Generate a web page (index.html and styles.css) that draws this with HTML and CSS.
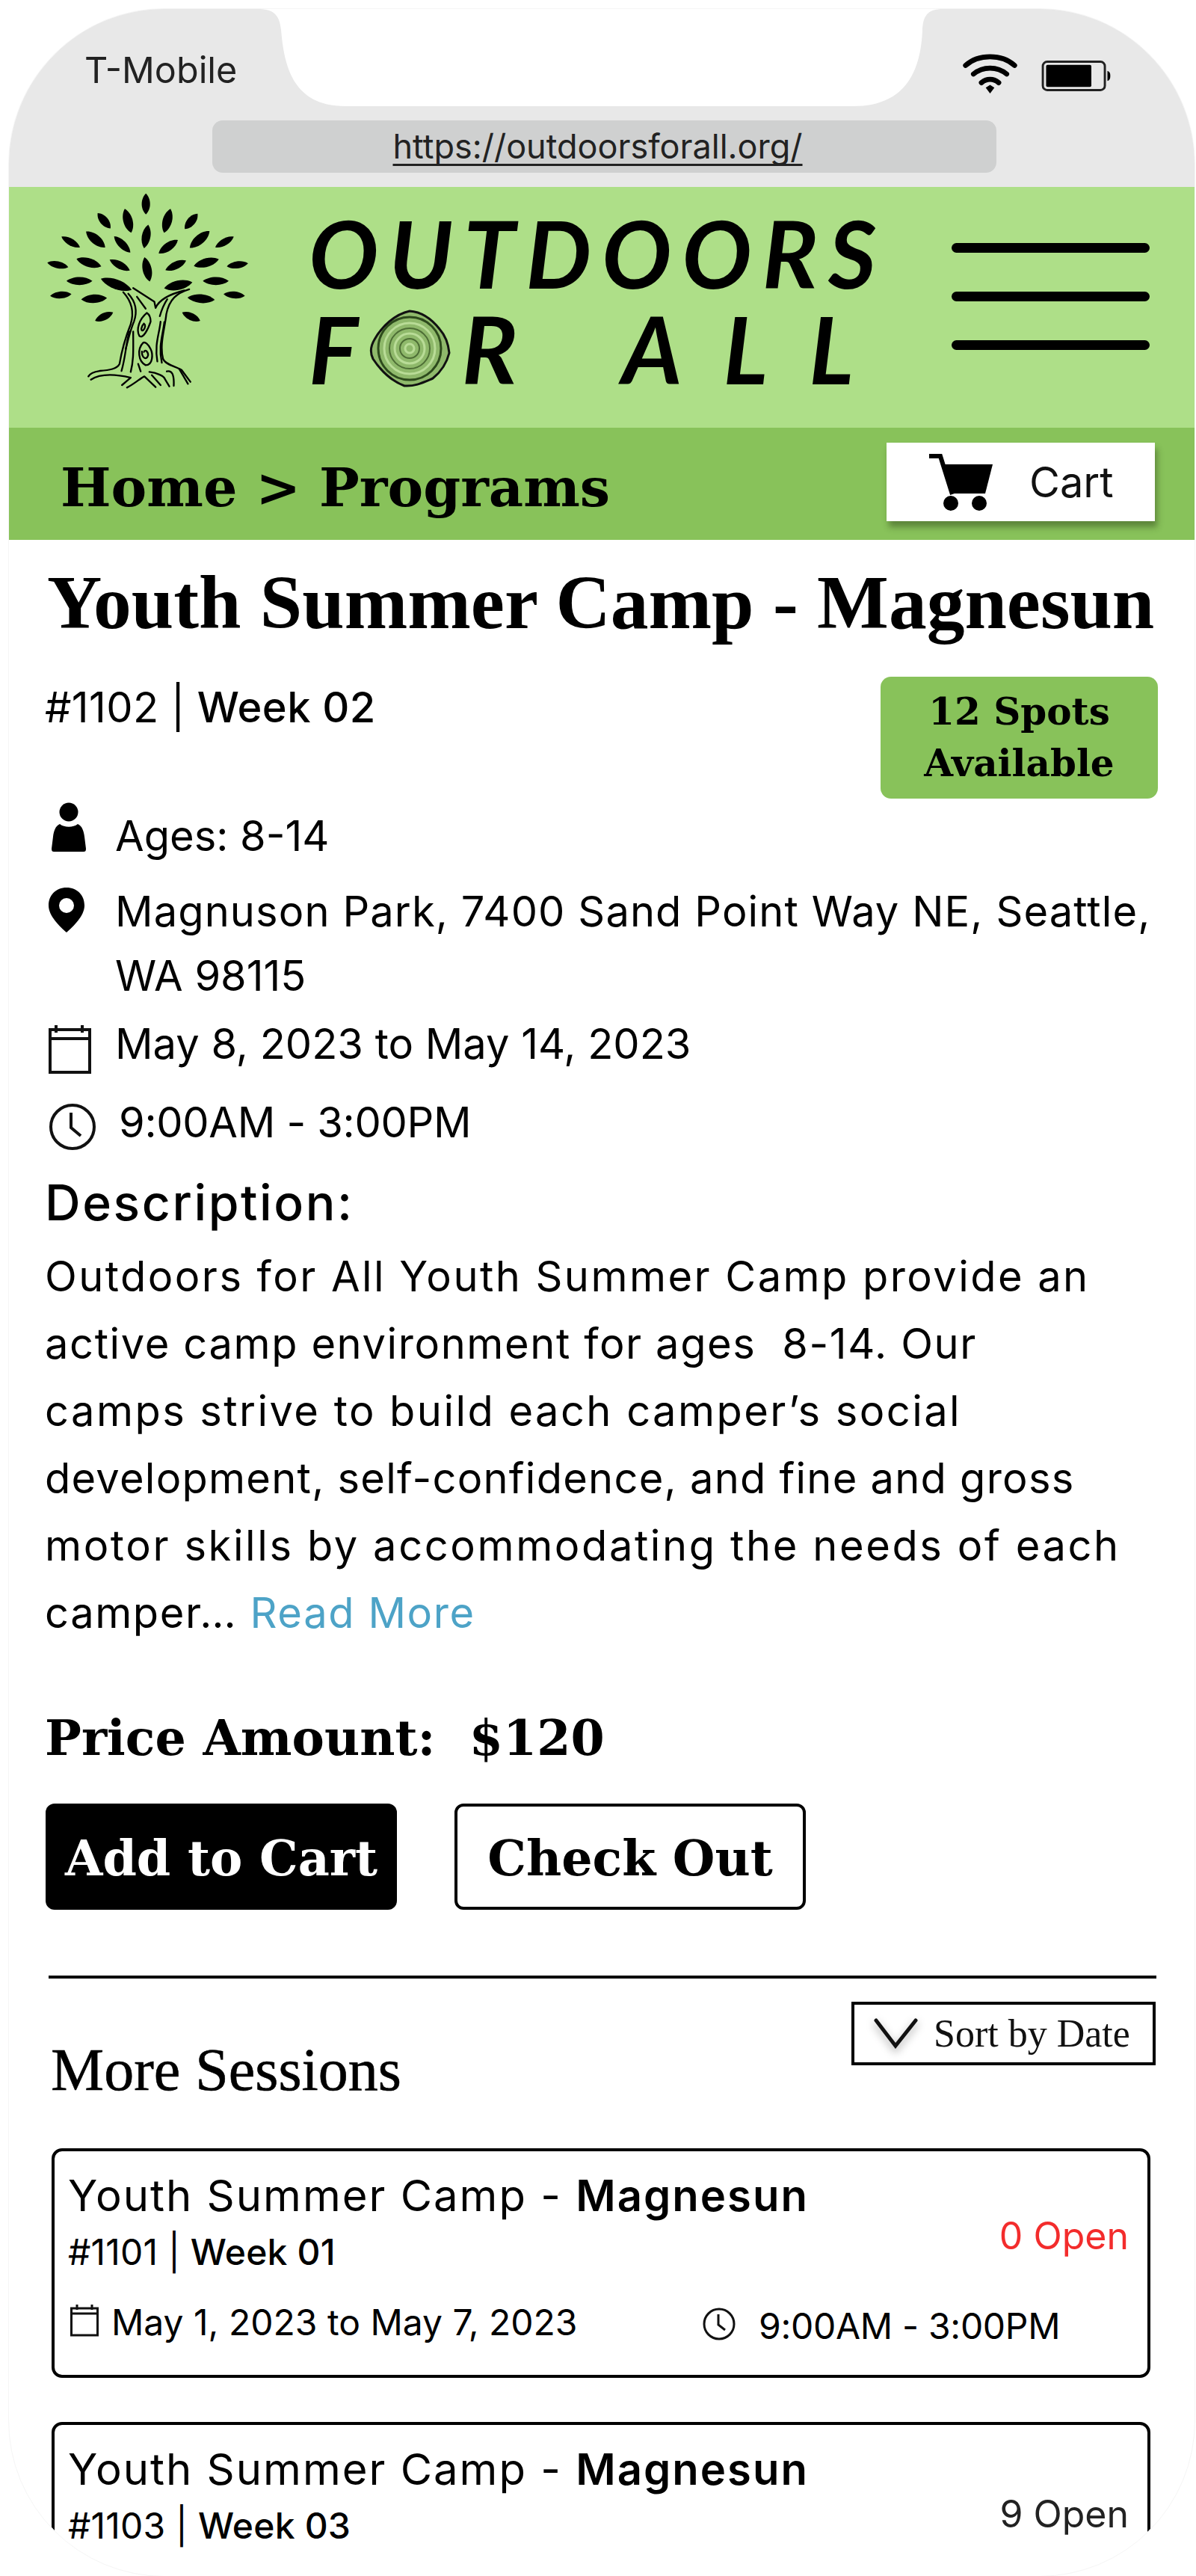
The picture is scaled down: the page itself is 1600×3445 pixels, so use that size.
FILE: index.html
```html
<!DOCTYPE html>
<html lang="en">
<head>
<meta charset="utf-8">
<title>Youth Summer Camp - Magnesun</title>
<link rel="stylesheet" href="styles.css">
</head>
<body>
<div class="phone">
  <div class="status">
    <svg class="notch" viewBox="12 12 1586 240" aria-hidden="true"><path d="M345 12C368 12 374 22 376 40C380 85 390 142 462 142H1142C1215 142 1232 90 1234 40C1235 22 1240 12 1262 12Z"/></svg>
    <div class="status-top">
      <span class="carrier">T-Mobile</span>
      <div class="status-icons">
        <svg class="wifi" viewBox="0 0 76 56" aria-hidden="true"><g class="wifi-arcs"><path d="M4 16C22 0 54 0 72 16"/><path d="M15 28C28 17 48 17 61 28"/><path d="M26 40C33 34 43 34 50 40"/></g><path d="M32 47L38 43L44 47L38 55Z"/></svg>
        <svg class="battery" viewBox="0 0 94 42" aria-hidden="true"><rect x="1.5" y="1.5" width="85" height="39" rx="6" class="batt-case"/><rect x="6" y="6" width="62" height="30" rx="2"/><path d="M90 14C93 15 94 17 94 21C94 25 93 27 90 28Z"/></svg>
      </div>
    </div>
    <div class="url-bar"><a class="url" href="#">https://outdoorsforall.org/</a></div>
  </div>

  <header class="brand">
    <svg class="tree" viewBox="60 50 820 790" aria-hidden="true">
      <defs><path id="leaf" d="M-1 0C-.55-.85.45-1 1 0C.45 1-.55.85-1 0Z"/></defs>
      <g class="leaves">
        <use href="#leaf" transform="translate(466 97) rotate(90) scale(42 24)"/>
        <use href="#leaf" transform="translate(298 165) rotate(50) scale(40 24)"/>
        <use href="#leaf" transform="translate(394 165) rotate(75) scale(50 27)"/>
        <use href="#leaf" transform="translate(552 165) rotate(-75) scale(50 27)"/>
        <use href="#leaf" transform="translate(648 167) rotate(-50) scale(40 24)"/>
        <use href="#leaf" transform="translate(467 228) rotate(-80) scale(48 25)"/>
        <use href="#leaf" transform="translate(164 250) rotate(30) scale(43 20)"/>
        <use href="#leaf" transform="translate(264 240) rotate(40) scale(50 27)"/>
        <use href="#leaf" transform="translate(371 260) rotate(45) scale(46 22)"/>
        <use href="#leaf" transform="translate(556 269) rotate(-35) scale(47 24)"/>
        <use href="#leaf" transform="translate(682 240) rotate(-40) scale(52 27)"/>
        <use href="#leaf" transform="translate(782 250) rotate(-30) scale(43 20)"/>
        <use href="#leaf" transform="translate(112 342) rotate(12) scale(43 20)"/>
        <use href="#leaf" transform="translate(237 333) rotate(17) scale(52 25)"/>
        <use href="#leaf" transform="translate(361 343) rotate(28) scale(46 22)"/>
        <use href="#leaf" transform="translate(471 360) rotate(78) scale(50 26)"/>
        <use href="#leaf" transform="translate(586 344) rotate(-25) scale(46 22)"/>
        <use href="#leaf" transform="translate(709 333) rotate(-15) scale(52 25)"/>
        <use href="#leaf" transform="translate(834 342) rotate(-8) scale(43 20)"/>
        <use href="#leaf" transform="translate(199 407) scale(52 23)"/>
        <use href="#leaf" transform="translate(347 420) rotate(20) scale(66 28)"/>
        <use href="#leaf" transform="translate(596 424) rotate(-12) scale(58 27)"/>
        <use href="#leaf" transform="translate(747 407) scale(52 23)"/>
        <use href="#leaf" transform="translate(124 463) rotate(-5) scale(43 20)"/>
        <use href="#leaf" transform="translate(258 478) rotate(-3) scale(52 25)"/>
        <use href="#leaf" transform="translate(688 478) rotate(5) scale(55 25)"/>
        <use href="#leaf" transform="translate(821 463) rotate(5) scale(43 20)"/>
        <use href="#leaf" transform="translate(298 550) rotate(-25) scale(40 21)"/>
        <use href="#leaf" transform="translate(648 550) rotate(25) scale(40 21)"/>
      </g>
      <g class="trunk">
        <path d="M375 452C410 490 420 530 405 580C385 630 370 680 360 740C350 760 320 765 280 768C255 772 240 780 235 790"/>
        <path d="M395 458C425 490 432 530 418 570C405 600 395 640 385 680"/>
        <path d="M640 440C590 455 560 480 548 540C542 600 520 660 535 720C545 745 590 750 610 765L645 812"/>
        <path d="M415 435L500 490L505 515C520 480 560 460 620 445"/>
        <path d="M430 470L465 518"/>
        <path d="M470 535C440 560 425 600 440 628C455 640 475 600 485 570C485 550 478 540 470 535Z"/>
        <path d="M458 578C445 590 445 610 455 605C465 595 465 582 458 578"/>
        <path d="M455 655C430 680 435 730 465 745C495 745 495 700 485 680C475 660 462 650 455 655Z"/>
        <path d="M450 690C450 720 470 725 475 705C475 690 462 680 458 692"/>
        <path d="M400 610C385 660 385 710 368 768"/>
        <path d="M415 610C415 680 418 720 405 772"/>
        <path d="M525 570C520 620 500 660 512 730"/>
        <path d="M552 480C535 505 530 520 522 548"/>
        <path d="M540 572C535 620 515 670 530 735"/>
        <path d="M245 803C280 780 340 780 405 795L370 825"/>
        <path d="M390 835C420 820 440 800 460 790L505 833"/>
        <path d="M480 772C510 775 540 790 542 800L560 830"/>
        <path d="M550 770C570 765 580 780 578 828"/>
        <path d="M435 740L445 770"/>
        <path d="M525 825L490 785"/>
        <path d="M600 760L635 820"/>
      </g>
    </svg>
    <div class="wordmark">
      <div class="word-line">OUTDOORS</div>
      <div class="word-line word-line-two">
        <span class="word-f">F</span>
        <svg class="ring" viewBox="0 0 110 104" aria-label="O" role="img">
          <path class="ring-bark" d="M55 2C70 3 84 12 95 26C104 36 107 48 108 58C104 74 96 84 86 92C72 98 62 103 48 102C32 96 18 84 6 66C2 58 2 50 8 40C18 22 36 6 55 2Z"/>
          <circle class="ring-line" cx="55" cy="52" r="42"/>
          <circle class="ring-pale" cx="55" cy="52" r="34"/>
          <circle class="ring-line ring-thin" cx="55" cy="52" r="27"/>
          <circle class="ring-pale" cx="55" cy="52" r="20"/>
          <circle class="ring-line ring-thin" cx="55" cy="52" r="13"/>
          <circle class="ring-pale" cx="55" cy="52" r="6"/>
        </svg>
        <span class="word-rest">R ALL</span>
      </div>
    </div>
    <div class="menu" aria-label="Menu"><i></i><i></i><i></i></div>
  </header>

  <nav class="crumbs">
    <span class="crumb-text">Home &gt; Programs</span>
    <a class="cart" href="#">
      <svg class="cart-icon" viewBox="0 0 86 78" aria-hidden="true"><path class="cart-handle" d="M0 4H15L31 55"/><path d="M19 15H85L75 54H30Z"/><circle cx="29" cy="67" r="10"/><circle cx="67" cy="67" r="10"/></svg>
      <span>Cart</span>
    </a>
  </nav>

  <main class="content">
    <h1 class="title">Youth Summer Camp - Magnesun</h1>
    <div class="meta">
      <p class="code">#1102 | <b>Week 02</b></p>
      <div class="badge">12 Spots<br>Available</div>
    </div>

    <div class="info info-ages">
      <svg class="ico" viewBox="0 0 70 70" aria-hidden="true"><circle cx="32" cy="13" r="12.5"/><path d="M20 29C26 34 38 34 44 29C50 32 52 38 53 46L55 62C55 65 54 66 52 66H12C10 66 9 65 9 62L11 46C12 38 14 32 20 29Z"/></svg>
      <span>Ages: 8-14</span>
    </div>
    <div class="info info-place">
      <svg class="ico" viewBox="0 0 70 70" aria-hidden="true"><path fill-rule="evenodd" d="M29 0C43 0 53 10 53 24C53 38 38 52 29 60C20 52 5 38 5 24C5 10 15 0 29 0ZM29 14A10 10 0 1 0 29 34A10 10 0 1 0 29 14Z"/></svg>
      <span><span class="place-first">Magnuson Park, 7400 Sand Point Way NE, Seattle,</span><br>WA 98115</span>
    </div>
    <div class="info info-date">
      <svg class="ico" viewBox="0 0 70 70" aria-hidden="true"><g class="line-ico"><rect x="7" y="9" width="53" height="57"/><path d="M7 21H60M15 3V13M50 3V13"/></g></svg>
      <span>May 8, 2023 to May 14, 2023</span>
    </div>
    <div class="info info-time">
      <svg class="ico" viewBox="0 0 70 70" aria-hidden="true"><g class="line-ico"><circle cx="37" cy="35" r="29"/><path d="M35 16V36L48 47"/></g></svg>
      <span class="time-text">9:00AM - 3:00PM</span>
    </div>

    <h2 class="desc-head">Description:</h2>
    <p class="desc"><span class="ln-wide">Outdoors for All Youth Summer Camp provide an</span><br><span class="ln-tight">active camp environment for ages&nbsp; 8-14. Our</span><br><span class="ln-wide">camps strive to build each camper’s social</span><br><span class="ln-snug">development, self-confidence, and fine and gross</span><br><span class="ln-wider">motor skills by accommodating the needs of each</span><br><span class="ln-tight">camper… <a class="more" href="#">Read More</a></span></p>

    <p class="price">Price Amount:&nbsp; $120</p>
    <div class="actions">
      <a class="btn btn-solid" href="#">Add to Cart</a>
      <a class="btn btn-line" href="#">Check Out</a>
    </div>

    <hr class="rule">

    <div class="more-head">
      <h2 class="more-title">More Sessions</h2>
      <button class="sort" type="button">
        <svg class="chev" viewBox="0 0 60 42" aria-hidden="true"><path d="M3 3L29 37L56 3"/></svg>
        <span>Sort by Date</span>
      </button>
    </div>

    <article class="card">
      <div class="card-top">
        <div>
          <h3 class="card-title">Youth Summer Camp - <b>Magnesun</b></h3>
          <p class="card-code">#1101 | <b>Week 01</b></p>
        </div>
        <span class="open open-none">0 Open</span>
      </div>
      <div class="card-when">
        <div class="when when-date">
          <svg class="ico-sm" viewBox="0 0 38 44" aria-hidden="true"><g class="line-sm"><rect x="1.5" y="6" width="35" height="36"/><path d="M1.5 13H36.5M9 1V8M29 1V8"/></g></svg>
          <span>May 1, 2023 to May 7, 2023</span>
        </div>
        <div class="when when-time">
          <svg class="ico-sm ico-clock" viewBox="0 0 46 46" aria-hidden="true"><g class="line-sm"><circle cx="23" cy="23" r="20"/><path d="M22 10V24L31 31"/></g></svg>
          <span>9:00AM - 3:00PM</span>
        </div>
      </div>
    </article>

    <article class="card card-next">
      <div class="card-top">
        <div>
          <h3 class="card-title">Youth Summer Camp - <b>Magnesun</b></h3>
          <p class="card-code">#1103 | <b>Week 03</b></p>
        </div>
        <span class="open open-some">9 Open</span>
      </div>
    </article>
  </main>
</div>
</body>
</html>
```
FILE: styles.css
```css
* { box-sizing: border-box; }
html, body { margin: 0; padding: 0; background: #fff; }
body { height: 3445px; overflow: hidden; font-family: Inter, "Noto Sans", sans-serif; color: #000; }
a { color: inherit; text-decoration: none; }
h1, h2, h3, p { margin: 0; font-weight: 400; }

.phone {
  width: 1586px;
  height: 3433px;
  margin: 12px 0 0 12px;
  border-radius: 208px;
  outline: 1px solid #f5f5f5;
  overflow: hidden;
  background: #fff;
}

.status { position: relative; height: 238px; background: #e8e8e8; }
.notch { position: absolute; left: 0; top: 0; width: 1586px; height: 240px; fill: #fff; }
.status-top { position: relative; display: flex; justify-content: space-between; padding: 54px 112px 0 101px; height: 149px; }
.carrier { font-size: 48.5px; line-height: 56px; color: #222; }
.status-icons { display: flex; gap: 31px; margin-top: 6px; }
.wifi { width: 75px; height: 54px; }
.wifi-arcs { fill: none; stroke: #000; stroke-width: 7; stroke-linecap: round; }
.battery { width: 93px; height: 41px; margin-top: 9px; }
.batt-case { fill: none; stroke: #222; stroke-width: 3; }
.url-bar { position: relative; width: 1049px; height: 70px; margin-left: 272px; padding-right: 18px; border-radius: 14px; background: #cfd0d0; display: flex; justify-content: center; align-items: center; }
.url { font-size: 45px; line-height: 54px; color: #222; text-decoration: underline; text-decoration-thickness: 3px; text-underline-offset: 7px; text-decoration-skip-ink: none; }

.brand { display: flex; align-items: flex-start; height: 322px; padding: 7px 60px 0 48px; background: #aedf88; }
.tree { width: 273px; height: 263px; flex: none; }
.leaves { fill: #000; }
.trunk { fill: none; stroke: #000; stroke-width: 7; stroke-linecap: round; stroke-linejoin: round; }
.wordmark { width: 770px; margin: 17px 0 0 80px; font-family: Lato, sans-serif; font-style: italic; font-weight: 700; font-size: 124px; line-height: 128px; white-space: nowrap; }
.word-line { letter-spacing: 14px; }
.word-line-two { display: flex; align-items: center; }
.word-f { width: 120px; }
.ring { width: 110px; height: 104px; margin-right: 15px; flex: none; }
.word-rest { letter-spacing: 55px; word-spacing: 6px; }
.ring-bark { fill: #8fb96b; stroke: #111; stroke-width: 3; }
.ring-line { fill: none; stroke: #2d4a1c; stroke-width: 3; }
.ring-thin { stroke-width: 2; stroke: #4d6d35; }
.ring-pale { fill: none; stroke: #b9dc97; stroke-width: 3; }
.menu { display: flex; flex-direction: column; gap: 52px; width: 265px; margin: 68px 0 0 auto; }
.menu i { display: block; height: 13px; border-radius: 7px; background: #000; }

.crumbs { display: flex; justify-content: space-between; align-items: flex-start; height: 150px; padding: 20px 53px 0 69px; background: #88c25a; }
.crumb-text { margin-top: 5px; font-family: "DejaVu Serif", serif; font-weight: 700; font-size: 71.5px; line-height: 110px; white-space: nowrap; }
.cart { display: flex; align-items: center; gap: 48px; width: 359px; height: 105px; padding-left: 57px; background: #fff; box-shadow: 3px 8px 8px rgba(40, 60, 20, .45); font-size: 56px; color: #111; }
.cart-icon { width: 86px; height: 78px; flex: none; }
.cart-handle { fill: none; stroke: #000; stroke-width: 6; }

.content { padding: 0 52px 0 48px; }
.title { margin: 29px 0 0 3px; font-family: "Liberation Serif", serif; font-weight: 700; font-size: 101.5px; line-height: 110px; white-space: nowrap; }
.meta { display: flex; justify-content: space-between; align-items: flex-start; margin-top: 44px; }
.code { font-size: 56px; line-height: 82px; letter-spacing: .4px; }
.code b { font-weight: 500; }
.badge { width: 371px; height: 163px; margin-right: -3px; padding-top: 12px; border-radius: 14px; background: #88c25a; font-family: "DejaVu Serif", serif; font-weight: 700; font-size: 50px; line-height: 69px; text-align: center; }

.info { display: flex; font-size: 56px; line-height: 86px; }
.ico { width: 70px; height: 70px; flex: none; margin: 8px 24px 0 0; }
.line-ico { fill: none; stroke: #111; stroke-width: 4; }
.info-ages { margin-top: 7px; }
.info-ages .ico { margin-top: -2px; }
.info-place { margin-top: 15px; }
.info-place .ico { margin-top: 11px; }
.place-first { letter-spacing: 1.1px; white-space: nowrap; }
.info-date { margin-top: 5px; }
.info-date .ico { margin-top: 15px; }
.info-time { margin-top: 19px; }
.info-time .ico { margin-top: 14px; }
.time-text { margin-left: 5px; letter-spacing: -.3px; }

.desc-head { margin-top: 24px; font-size: 66px; font-weight: 500; line-height: 80px; letter-spacing: 2.6px; }
.desc { margin-top: 14px; font-size: 56px; line-height: 90px; white-space: nowrap; }
.ln-wide { letter-spacing: 2.45px; }
.ln-wider { letter-spacing: 2.6px; }
.ln-tight { letter-spacing: 1.6px; }
.ln-snug { letter-spacing: 1.25px; }
.more { color: #4da3c7; }

.price { margin-top: 82px; font-family: "DejaVu Serif", serif; font-weight: 700; font-size: 65px; line-height: 80px; white-space: nowrap; }
.actions { display: flex; gap: 77px; margin: 48px 0 0 1px; }
.btn { display: flex; justify-content: center; align-items: center; width: 470px; height: 142px; padding-top: 4px; border-radius: 12px; font-family: "DejaVu Serif", serif; font-weight: 700; font-size: 65px; }
.btn-solid { background: #000; color: #fff; }
.btn-line { border: 4px solid #000; }

.rule { height: 4px; margin: 88px -1px 0 5px; border: 0; background: #000; }

.more-head { display: flex; justify-content: space-between; align-items: flex-start; height: 164px; }
.more-title { margin: 80px 0 0 8px; font-family: "Liberation Serif", serif; font-size: 80px; line-height: 84px; -webkit-text-stroke: .6px #000; }
.sort { display: flex; align-items: center; width: 407px; height: 85px; margin-top: 31px; padding: 0 0 0 26px; border: 4px solid #000; background: #fff; font-family: "Liberation Serif", serif; font-size: 52px; color: #111; }
.chev { width: 60px; height: 42px; flex: none; margin: 0 20px 0 0; filter: drop-shadow(0 5px 6px rgba(0, 0, 0, .35)); }
.chev path { fill: none; stroke: #111; stroke-width: 5; stroke-linecap: round; }

.card { width: 1470px; height: 307px; margin: 63px 0 0 9px; padding: 24px 25px 0 18px; border: 4px solid #000; border-radius: 14px; }
.card-next { margin-top: 59px; }
.card-top { display: flex; justify-content: space-between; align-items: flex-start; }
.card-title { font-size: 58px; line-height: 70px; letter-spacing: 2px; white-space: nowrap; }
.card-title b { font-weight: 600; }
.card-code { margin-top: 11px; font-size: 48px; line-height: 60px; letter-spacing: .2px; }
.card-code b { font-weight: 500; }
.open { font-size: 50px; line-height: 60px; }
.open-none { margin-top: 59px; color: #f32c2c; }
.open-some { margin-top: 65px; color: #222; }
.card-when { display: flex; margin-top: 34px; font-size: 48px; line-height: 60px; }
.when { display: flex; align-items: flex-start; }
.when-date { width: 845px; }
.ico-sm { width: 38px; height: 44px; flex: none; margin: 5px 17px 0 3px; }
.ico-clock { width: 46px; height: 46px; margin: 9px 30px 0 3px; }
.when-time span { margin-top: 5px; letter-spacing: -.3px; }
.line-sm { fill: none; stroke: #111; stroke-width: 3; }
```
